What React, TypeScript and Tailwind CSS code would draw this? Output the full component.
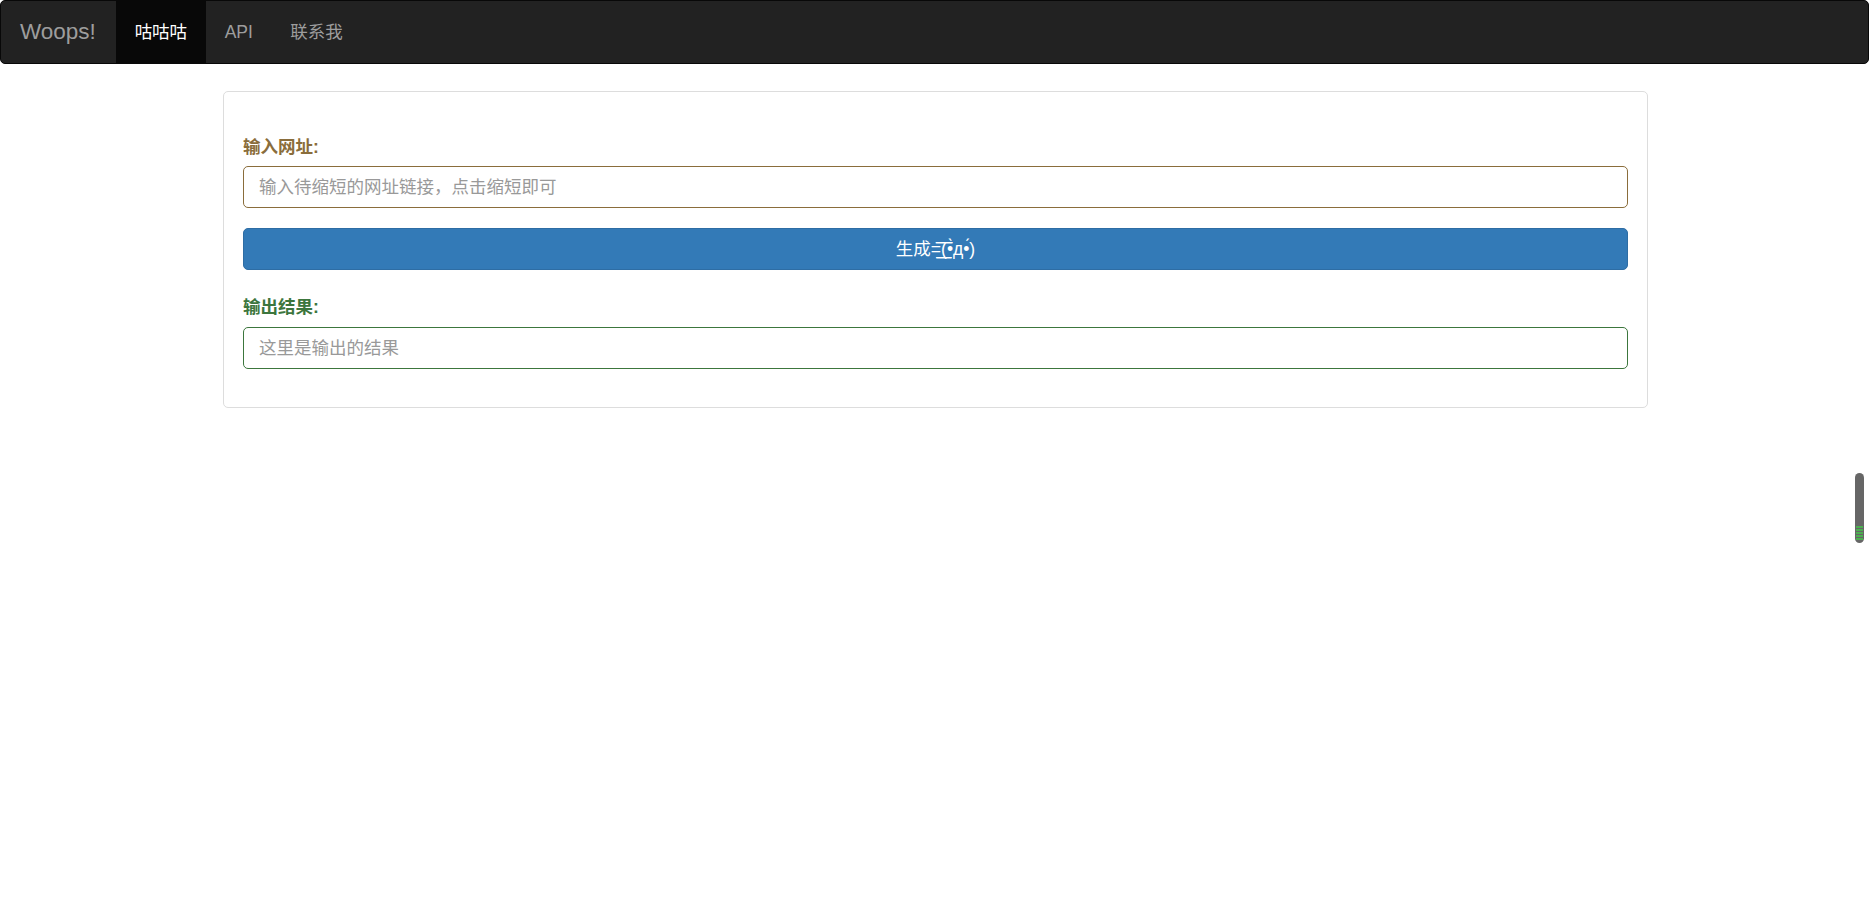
export default function App() {
  return (
    <div className="relative min-h-screen bg-white font-['Liberation_Sans','Noto_Sans_CJK_SC',sans-serif] text-[17.5px] text-[#333]">
      <nav className="flex h-[64px] rounded-[5px] border border-[#080808] bg-[#222]">
        <a className="pr-[20px] pl-[19px] text-[22.5px] leading-[62px] text-[#9d9d9d]">Woops!</a>
        <a className="bg-[#080808] px-[18.75px] leading-[62px] text-white">咕咕咕</a>
        <a className="px-[18.75px] leading-[62px] text-[#9d9d9d]">API</a>
        <a className="px-[18.75px] leading-[62px] text-[#9d9d9d]">联系我</a>
      </nav>

      <div className="mx-auto mt-[27px] w-[1425px] translate-x-[1px] rounded-[5px] border border-[#ddd] px-[19px] pt-[43px] pb-[38px]">
        <label className="block font-bold leading-[25px] text-[#8a6d3b]">输入网址:</label>
        <input
          className="mt-[6px] block h-[42px] w-full rounded-[5px] border border-[#8a6d3b] px-[15px] outline-none placeholder:text-[#999]"
          placeholder="输入待缩短的网址链接，点击缩短即可"
        />
        <button className="mt-[20px] block h-[42px] w-full rounded-[5px] border border-[#2e6da4] bg-[#337ab7] text-white">
          生成=͟͟͞͞(•̀д•́)
        </button>
        <label className="mt-[25px] block font-bold leading-[25px] text-[#3c763d]">输出结果:</label>
        <input
          className="mt-[7px] block h-[42px] w-full rounded-[5px] border border-[#3c763d] px-[15px] outline-none placeholder:text-[#999]"
          placeholder="这里是输出的结果"
        />
      </div>

      {/* scroll progress widget */}
      <div className="fixed top-[473px] right-[5px] flex h-[70px] w-[9px] flex-col justify-end overflow-hidden rounded-full bg-[#666]">
        <div className="mb-[3px] flex flex-col gap-[1px] px-[1px]">
          <div className="h-[2px] bg-[#4caf50]" />
          <div className="h-[2px] bg-[#4caf50]" />
          <div className="h-[2px] bg-[#4caf50]" />
          <div className="h-[2px] bg-[#4caf50]" />
          <div className="h-[2px] bg-[#4caf50]" />
        </div>
      </div>
    </div>
  );
}
